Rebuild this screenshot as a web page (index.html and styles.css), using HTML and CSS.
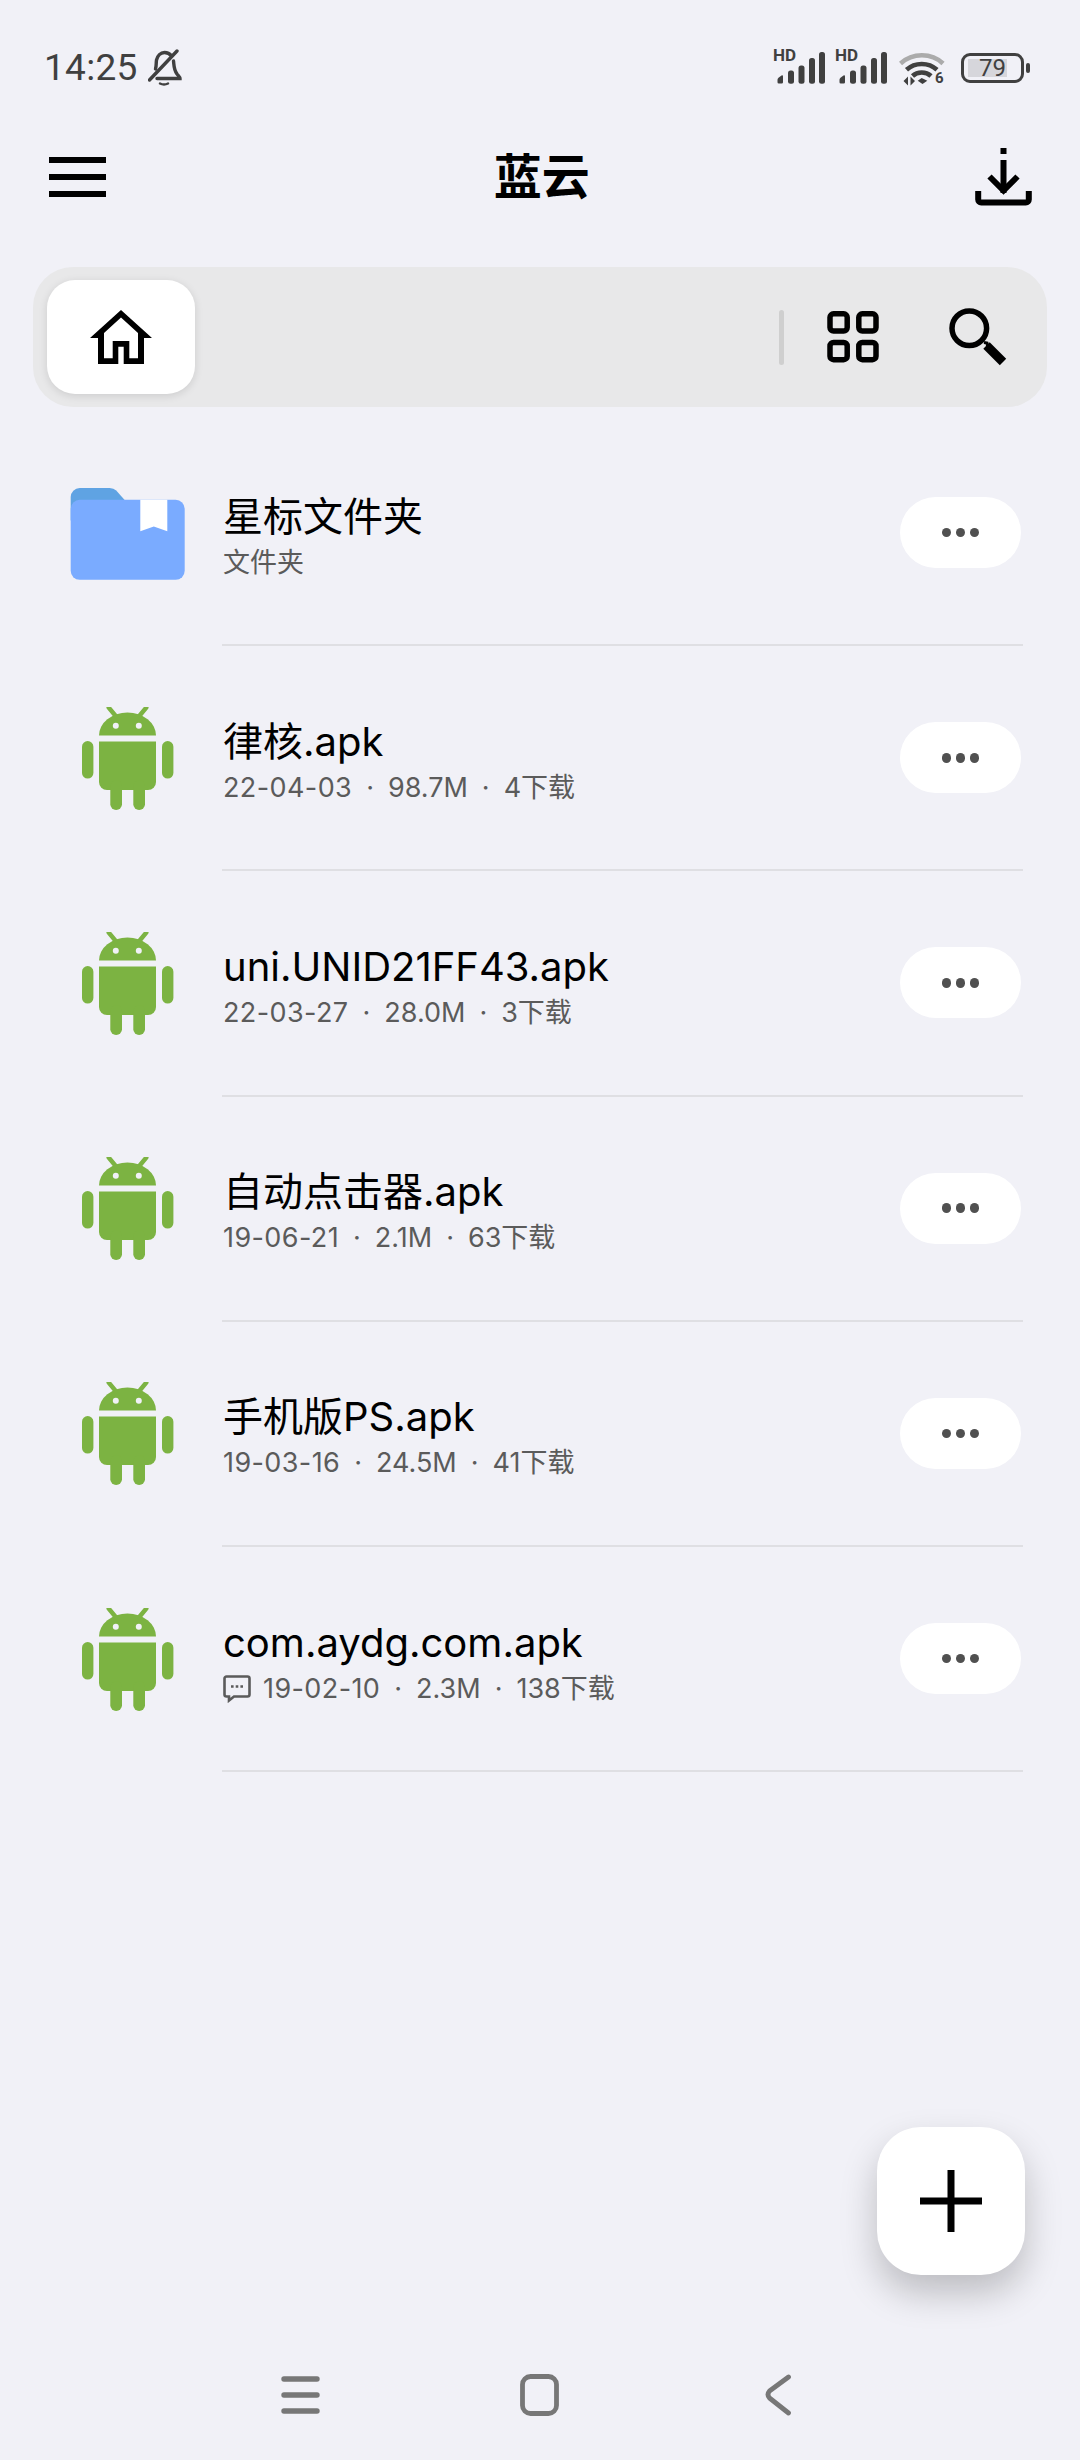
FILE: index.html
```html
<!DOCTYPE html>
<html lang="zh-CN">
<head>
  <meta charset="UTF-8">
  <meta name="viewport" content="width=device-width, initial-scale=1.0">
  <title>蓝云</title>
  <link rel="stylesheet" href="styles.css">
</head>
<body>

  <svg class="defs" width="0" height="0">
    <symbol id="android" viewBox="82 707 92 104">
      <g fill="#7cb342">
        <path d="M99 735.5a28.5 23 0 0 1 57 0z"/>
        <path d="M115.7 716l-7-8.5M139.3 716l7-8.5" stroke="#7cb342" stroke-width="4.4" stroke-linecap="round"/>
        <path d="M99 741.5h57V782a8 8 0 0 1-8 8H107a8 8 0 0 1-8-8z"/>
        <rect x="82" y="741" width="11.4" height="37.6" rx="5.7"/>
        <rect x="162" y="741" width="11.4" height="37.6" rx="5.7"/>
        <rect x="110.3" y="780" width="11.7" height="30" rx="5.8"/>
        <rect x="133.3" y="780" width="11.7" height="30" rx="5.8"/>
      </g>
      <circle cx="115.8" cy="725.7" r="3" fill="#f1f1f7"/>
      <circle cx="138.8" cy="725.7" r="3" fill="#f1f1f7"/>
    </symbol>
    <symbol id="bars" viewBox="0 0 50 32">
      <path d="M2.500 30.300v-2.600q0-1.200 1-2l3-2.200q1.500-.8 1.500 1v5.800a1.300 1.300 0 0 1-1.300 1.300H3.800a1.300 1.300 0 0 1-1.300-1.300z" fill="#404040"/>
      <rect x="13" y="18.500" width="6" height="13.300" rx="2.500" fill="#404040"/>
      <rect x="23.500" y="13.500" width="6" height="18.300" rx="2.500" fill="#404040"/>
      <rect x="34" y="6" width="6" height="25.800" rx="2.500" fill="#404040"/>
      <rect x="44" y="0" width="6" height="31.800" rx="2.500" fill="#404040"/>
    </symbol>
  </svg>

  <div class="status-bar">
    <div class="status-left">
      <span class="time">14:25</span>
      <svg class="bell" width="34" height="38" viewBox="143 50 34 38" fill="none" stroke="#404040" stroke-width="3.400" stroke-linecap="round">
        <path d="M150.500 70c1-3 .5-6 1-9 1-4 4-7.500 8-7.500 3 0 5.500 1.500 7 3.500"/>
        <path d="M168.500 62c.5 3 0 8 3.500 13 1.500 2 3 3 3 4.500H152"/>
        <path d="M144.500 81L172 52"/>
        <path d="M155 84.500q4 2 8 0" stroke-width="2.500"/>
      </svg>
    </div>
    <div class="status-right">
      <div class="signal">
        <span class="hd">HD</span>
        <svg width="50" height="32"><use href="#bars"/></svg>
      </div>
      <div class="signal">
        <span class="hd">HD</span>
        <svg width="50" height="32"><use href="#bars"/></svg>
      </div>
      <div class="wifi">
        <svg width="47" height="36" viewBox="900 51 47 36" fill="none">
          <path d="M901.500 64.500c12-11 31-11 42.500 0" stroke="#ababab" stroke-width="4.600"/>
          <path d="M907.500 70.800c8.500-7.800 22-7.800 30.500 0" stroke="#404040" stroke-width="4.600"/>
          <path d="M913.500 77c5-4.600 13.500-4.600 18.500 0" stroke="#404040" stroke-width="4.600"/>
          <path d="M922.700 79l-4 2.800 4.800 3.200 4.800-3.200z" fill="#404040"/>
          <path d="M909 77.500v9l-4.500-4.500zM911.500 77.500v9l4.500-4.500z" fill="#404040"/>
        </svg>
        <span class="wifi-six">6</span>
      </div>
      <div class="battery">
        <span class="battery-fill">79</span>
      </div>
    </div>
  </div>

  <div class="toolbar">
    <svg width="57" height="40" viewBox="0 0 57 40" fill="#000">
      <rect y="0" width="57" height="6"/>
      <rect y="17" width="57" height="6"/>
      <rect y="34" width="57" height="6"/>
    </svg>
    <h1 class="title">蓝云</h1>
    <svg width="57" height="58" viewBox="974.500 148 57 58" fill="none" stroke="#000" stroke-width="6">
      <path d="M1003 148v6M1003 160v33"/>
      <path d="M989 176.500l14 14 14-14"/>
      <path d="M977.700 191v8.500a3 3 0 0 0 3 3h44.600a3 3 0 0 0 3-3V191"/>
    </svg>
  </div>

  <div class="pathbar">
    <div class="home-tab">
      <svg width="62" height="54" viewBox="90 309 62 54">
        <path fill-rule="evenodd" d="M121 309l31 28h-8v26h-20.300v-17.300h-5.400V363H98v-26h-8zM121 316.500l-17 15.500v25.300h8.700V340h16.600v17.300h8.700V332z"/>
      </svg>
    </div>
    <div class="pathbar-tools">
      <span class="pathbar-line"></span>
      <svg class="grid-icon" width="52" height="52" viewBox="827 310 52 52" fill="none" stroke="#000" stroke-width="5.500">
        <rect x="830" y="312.800" width="17.200" height="17.200" rx="3.500"/>
        <rect x="858.800" y="312.800" width="17.200" height="17.200" rx="3.500"/>
        <rect x="830" y="341.500" width="17.200" height="17.200" rx="3.500"/>
        <rect x="858.800" y="341.500" width="17.200" height="17.200" rx="3.500"/>
      </svg>
      <svg class="search-icon" width="58" height="58" viewBox="949 307 58 58" fill="none" stroke="#000">
        <circle cx="969.300" cy="327.300" r="17.300" stroke-width="5.500"/>
        <path d="M984 341.500l3 .5 .5 3" stroke-width="3"/>
        <path d="M986.500 344.500l16.500 16.500" stroke-width="9"/>
      </svg>
    </div>
  </div>

  <div class="file-list">

    <div class="file-row">
      <div class="file-icon">
        <svg width="115" height="92" viewBox="70 487.500 115 92">
          <path d="M70.700 520v-23.500a9 9 0 0 1 9-9h30q4 0 6.500 2.500l8 9v21z" fill="#5fa3e3"/>
          <rect x="70.700" y="499.300" width="114" height="80" rx="9" fill="#7aabff"/>
          <path d="M140.300 499.300h27v31.400l-13.500-4.700-13.500 4.700z" fill="#fff"/>
        </svg>
      </div>
      <div class="file-body">
        <div class="file-text">
          <div class="file-name">星标文件夹</div>
          <div class="file-meta"><span>文件夹</span></div>
        </div>
        <button class="more-btn"><i></i><i></i><i></i></button>
      </div>
    </div>

    <div class="file-row">
      <div class="file-icon"><svg width="92" height="104"><use href="#android"/></svg></div>
      <div class="file-body">
        <div class="file-text">
          <div class="file-name">律核.apk</div>
          <div class="file-meta"><span class="date">22-04-03</span><span class="dot">·</span><span>98.7M</span><span class="dot">·</span><span>4下载</span></div>
        </div>
        <button class="more-btn"><i></i><i></i><i></i></button>
      </div>
    </div>

    <div class="file-row">
      <div class="file-icon"><svg width="92" height="104"><use href="#android"/></svg></div>
      <div class="file-body">
        <div class="file-text">
          <div class="file-name">uni.UNID21FF43.apk</div>
          <div class="file-meta"><span class="date">22-03-27</span><span class="dot">·</span><span>28.0M</span><span class="dot">·</span><span>3下载</span></div>
        </div>
        <button class="more-btn"><i></i><i></i><i></i></button>
      </div>
    </div>

    <div class="file-row">
      <div class="file-icon"><svg width="92" height="104"><use href="#android"/></svg></div>
      <div class="file-body">
        <div class="file-text">
          <div class="file-name">自动点击器.apk</div>
          <div class="file-meta"><span class="date">19-06-21</span><span class="dot">·</span><span>2.1M</span><span class="dot">·</span><span>63下载</span></div>
        </div>
        <button class="more-btn"><i></i><i></i><i></i></button>
      </div>
    </div>

    <div class="file-row">
      <div class="file-icon"><svg width="92" height="104"><use href="#android"/></svg></div>
      <div class="file-body">
        <div class="file-text">
          <div class="file-name">手机版PS.apk</div>
          <div class="file-meta"><span class="date">19-03-16</span><span class="dot">·</span><span>24.5M</span><span class="dot">·</span><span>41下载</span></div>
        </div>
        <button class="more-btn"><i></i><i></i><i></i></button>
      </div>
    </div>

    <div class="file-row">
      <div class="file-icon"><svg width="92" height="104"><use href="#android"/></svg></div>
      <div class="file-body">
        <div class="file-text">
          <div class="file-name">com.aydg.com.apk</div>
          <div class="file-meta">
            <svg class="note-icon" width="28" height="28" viewBox="0 0 28 28" fill="none" stroke="#5b5b5b" stroke-width="2.600">
              <path d="M3.500 1.500h21a2 2 0 0 1 2 2v16a2 2 0 0 1-2 2H11l-5 4v-4H3.500a2 2 0 0 1-2-2v-16a2 2 0 0 1 2-2z"/>
              <path d="M8 11.500h2.600M12.700 11.500h2.600M17.400 11.500H20"/>
            </svg>
            <span class="date">19-02-10</span><span class="dot">·</span><span>2.3M</span><span class="dot">·</span><span>138下载</span>
          </div>
        </div>
        <button class="more-btn"><i></i><i></i><i></i></button>
      </div>
    </div>

  </div>

  <button class="fab">
    <svg width="62" height="62" viewBox="0 0 62 62" fill="#000">
      <rect x="27.500" y="0" width="7" height="62"/>
      <rect x="0" y="27.500" width="62" height="7"/>
    </svg>
  </button>

  <div class="nav-bar">
    <div class="nav-item">
      <svg width="39" height="38" viewBox="0 0 39 38" fill="none" stroke="#777" stroke-width="5.400" stroke-linecap="round">
        <path d="M3 3h33M3 19h33M3 35h33"/>
      </svg>
    </div>
    <div class="nav-item">
      <svg width="39" height="42" viewBox="0 0 39 42" fill="none" stroke="#777" stroke-width="4.800">
        <rect x="2.500" y="2.500" width="34" height="37" rx="8"/>
      </svg>
    </div>
    <div class="nav-item">
      <svg width="26" height="42" viewBox="0 0 26 42" fill="none" stroke="#777" stroke-width="4.800" stroke-linecap="round" stroke-linejoin="round">
        <path d="M23.500 3L4.500 17q-3 3.500 0 7L23.500 39"/>
      </svg>
    </div>
  </div>

</body>
</html>
```

FILE: styles.css
```css
* {
  box-sizing: border-box;
}

body {
  margin: 0;
  width: 1080px;
  height: 2460px;
  overflow: hidden;
  position: relative;
  display: flex;
  flex-direction: column;
  background-color: #f1f1f7;
  font-family: Inter, "Noto Sans CJK SC", sans-serif;
  color: #000;
}

.defs {
  position: absolute;
}

svg {
  display: block;
  flex-shrink: 0;
}

/* status bar */
.status-bar {
  height: 136px;
  padding: 0 50px 0 44px;
  display: flex;
  align-items: center;
  justify-content: space-between;
}

.status-left {
  display: flex;
  align-items: center;
  gap: 10px;
}

.time {
  font-family: Roboto, sans-serif;
  font-size: 37px;
  font-weight: 400;
  line-height: 44px;
  letter-spacing: 0.3px;
  color: #404040;
}

.status-right {
  display: flex;
  align-items: center;
  gap: 12px;
}

.signal {
  position: relative;
  width: 50px;
  height: 32px;
}

.hd {
  position: absolute;
  left: -2px;
  top: -5px;
  font-family: Roboto, sans-serif;
  font-weight: 700;
  font-size: 17px;
  line-height: 17px;
  color: #404040;
}

.wifi {
  position: relative;
  width: 47px;
  height: 36px;
  margin-left: 0;
}

.wifi-six {
  position: absolute;
  left: 36px;
  top: 20px;
  font-family: Roboto, sans-serif;
  font-weight: 700;
  font-size: 15px;
  line-height: 16px;
  color: #404040;
}

.battery {
  position: relative;
  width: 63px;
  height: 30px;
  margin-left: 3px;
  margin-right: 6px;
  padding: 3px 14px 3px 4px;
  border: 3px solid #404040;
  border-radius: 9px;
}

/* battery tip */
.battery::after {
  content: "";
  position: absolute;
  right: -9px;
  top: 7px;
  width: 4px;
  height: 10px;
  border-radius: 2px;
  background-color: #404040;
}

.battery-fill {
  display: block;
  height: 18px;
  padding-right: 1px;
  background-color: #d6d6db;
  font-family: Roboto, sans-serif;
  font-size: 24px;
  line-height: 18px;
  color: #404040;
  text-align: right;
}

/* toolbar */
.toolbar {
  height: 82px;
  padding: 0 48px 0 48.500px;
  display: flex;
  align-items: center;
  justify-content: space-between;
}

.title {
  margin: 0 0 0 3px;
  font-size: 48px;
  font-weight: 700;
  line-height: 60px;
}

/* path bar */
.pathbar {
  height: 140px;
  margin: 49px 33px 0;
  padding: 13px 40px 13px 14px;
  border-radius: 40px;
  background-color: #e8e8e9;
  display: flex;
  align-items: center;
  justify-content: space-between;
}

.home-tab {
  width: 148px;
  height: 114px;
  border-radius: 28px;
  background-color: #fff;
  box-shadow: 0 2px 8px rgba(0, 0, 0, 0.12);
  display: flex;
  align-items: center;
  justify-content: center;
}

.pathbar-tools {
  display: flex;
  align-items: center;
}

.pathbar-line {
  width: 5px;
  height: 55px;
  border-radius: 3px;
  background-color: #cfcfcf;
}

.grid-icon {
  margin-left: 43px;
}

.search-icon {
  margin-left: 70px;
}

/* file list */
.file-list {
  margin-top: 14px;
}

.file-row {
  height: 225.2px;
  display: flex;
}

.file-icon {
  width: 222px;
  padding-left: 70px;
  display: flex;
  align-items: center;
}

.file-row:not(:first-child) .file-icon {
  padding-left: 82px;
}

.file-body {
  flex: 1;
  margin-right: 57px;
  padding: 0 2px 0 1px;
  border-bottom: 2px solid #dfdfe3;
  display: flex;
  align-items: center;
  justify-content: space-between;
}

.file-text {
  margin-top: 12px;
}

.file-name {
  font-size: 40px;
  line-height: 48px;
  color: #000;
}

.file-meta {
  height: 44px;
  font-size: 27px;
  line-height: 44px;
  color: #5b5b5b;
  display: flex;
  align-items: center;
}

.date {
  letter-spacing: 0.4px;
}

.dot {
  margin: 0 14px;
}

.note-icon {
  margin-right: 12px;
}

.more-btn {
  width: 121px;
  height: 71px;
  padding: 0;
  border: none;
  border-radius: 36px;
  background-color: #fff;
  display: flex;
  align-items: center;
  justify-content: center;
  gap: 4.500px;
}

.more-btn i {
  width: 9.500px;
  height: 9.500px;
  border-radius: 50%;
  background-color: #505050;
}

/* floating add button */
.fab {
  position: absolute;
  left: 877px;
  top: 2127px;
  width: 148px;
  height: 148px;
  padding: 0;
  border: none;
  border-radius: 44px;
  background-color: #fff;
  box-shadow: 0 18px 36px rgba(0, 0, 0, 0.22);
  display: flex;
  align-items: center;
  justify-content: center;
}

/* nav bar */
.nav-bar {
  margin-top: auto;
  height: 130px;
  padding-left: 180.500px;
  display: flex;
  align-items: center;
}

.nav-item {
  width: 239px;
  display: flex;
  justify-content: center;
}
```
